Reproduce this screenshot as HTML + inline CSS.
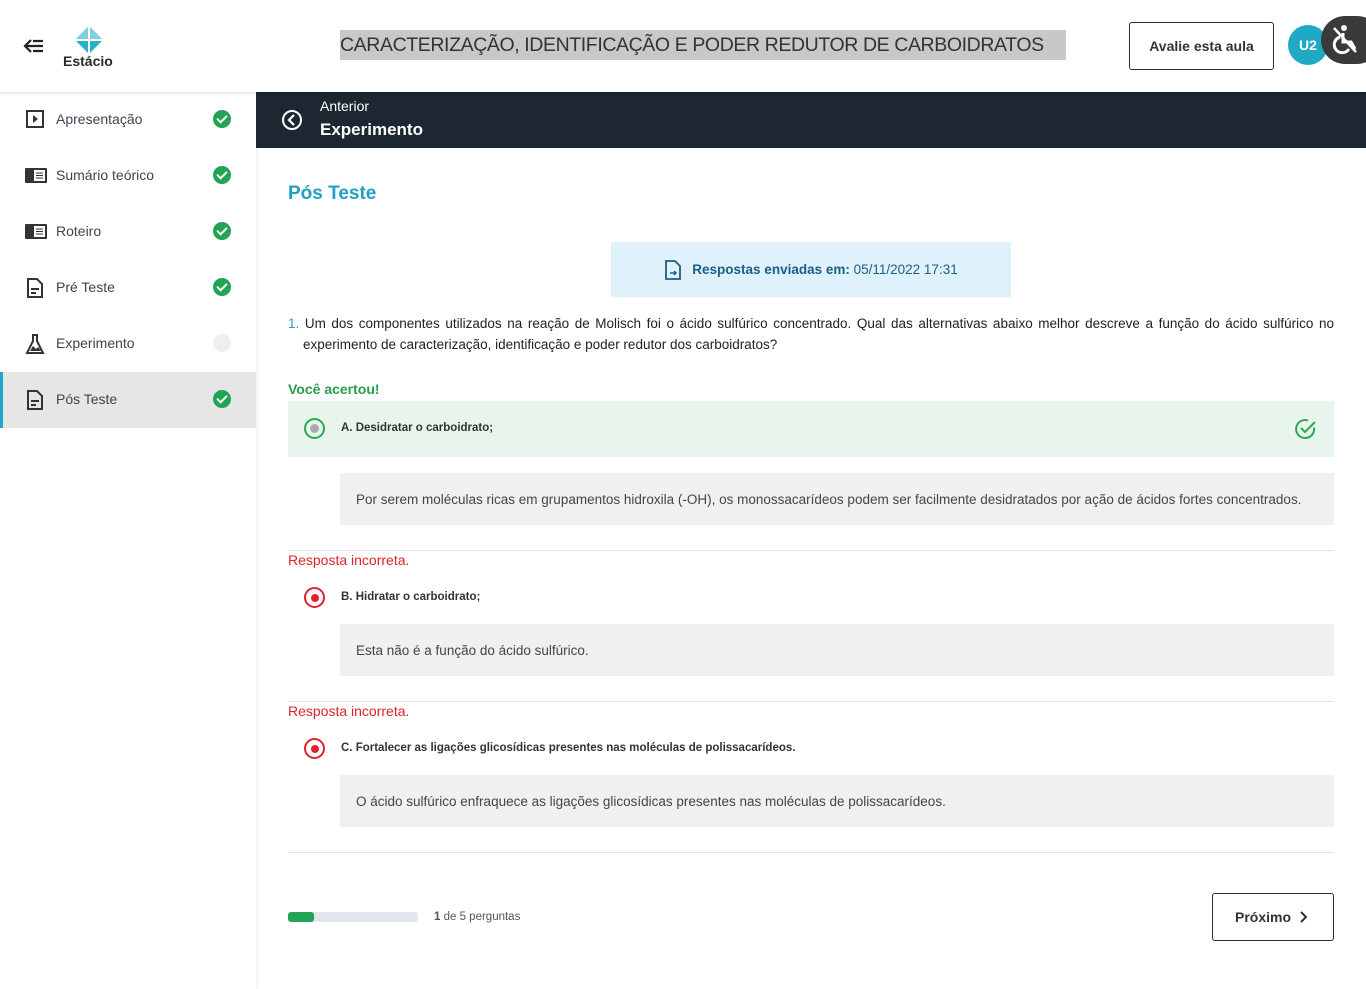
<!DOCTYPE html>
<html><head><meta charset="utf-8"><style>
*{box-sizing:border-box;margin:0;padding:0}
body{width:1366px;height:989px;overflow:hidden;background:#fff;font-family:"Liberation Sans",sans-serif;color:#333;position:relative}
.hdr{position:absolute;left:0;top:0;width:1366px;height:92px;background:#fff;box-shadow:0 1px 4px rgba(0,0,0,.15);z-index:2}
.side{position:absolute;left:0;top:92px;width:256px;height:897px;background:#fff;box-shadow:1px 0 3px rgba(0,0,0,.08)}
.it{position:relative;height:56px;display:flex;align-items:center;padding-left:56px;font-size:14px;color:#3d4450;padding-bottom:2px}
.it.act{background:#e6e6e6;border-left:3px solid #1fa9c4;padding-left:53px}
.it .ic{position:absolute;left:25px;top:18px}
.ok{position:absolute;left:213px;top:18px;width:18px;height:18px;border-radius:50%;background:#21a453}
.ok:after{content:"";position:absolute;left:6px;top:3px;width:4px;height:8px;border:solid #fff;border-width:0 2px 2px 0;transform:rotate(45deg)}
.ok.no{background:#eeeff1}.ok.no:after{display:none}
.it.act .ok{left:210px}
.bar{position:absolute;left:256px;top:92px;width:1110px;height:56px;background:#1d2731;color:#fff}
.abs{position:absolute}
.fb{position:absolute;left:340px;width:994px;height:52px;background:#f0f0f0;font-size:13.5px;color:#444;padding-left:16px;display:flex;align-items:center}
.red{color:#e0222a;font-size:14px}
.hr{position:absolute;left:288px;width:1046px;border-top:1px solid #e3e3e3}
.opt{position:absolute;font-size:11.5px;font-weight:bold;color:#333}
.rr{position:absolute;left:304px;width:21px;height:21px;border-radius:50%;border:2px solid #e0222a}
.rr:after{content:"";position:absolute;left:4.5px;top:4.5px;width:8px;height:8px;border-radius:50%;background:#e0222a}
</style></head><body>
<div class="hdr">
 <svg class="abs" style="left:23px;top:38px" width="22" height="16" viewBox="0 0 22 16"><path d="M8 2 2 8l6 6M2 8h18M10 3h10M10 13h10" stroke="#222" stroke-width="2.2" fill="none"/></svg>
 <svg class="abs" style="left:75px;top:26px" width="28" height="28" viewBox="0 0 28 28"><path d="M14 0 28 14 14 28 0 14z" fill="#2ab0c8"/><path d="M14 0 28 14H0z" fill="#7fd0d8"/><path d="M14 0v28M0 14h28" stroke="#fff" stroke-width="2"/></svg>
 <div class="abs" style="left:63px;top:53px;font-size:14px;font-weight:bold;color:#2a2a2a">Estácio</div>
 <div class="abs" style="left:340px;top:30px;height:30px;background:#c8c8c8;font-size:19.5px;line-height:30px;color:#333;width:726px;white-space:nowrap;overflow:hidden;letter-spacing:-0.4px">CARACTERIZAÇÃO, IDENTIFICAÇÃO E PODER REDUTOR DE CARBOIDRATOS</div>
 <div class="abs" style="left:1129px;top:22px;width:145px;height:48px;border:1px solid #2a2f36;border-radius:3px;font-size:14px;font-weight:bold;color:#333;display:flex;align-items:center;justify-content:center">Avalie esta aula</div>
 <div class="abs" style="left:1288px;top:25px;width:40px;height:40px;border-radius:50%;background:#1fa9c4;color:#fff;font-weight:bold;font-size:14px;display:flex;align-items:center;justify-content:center">U2</div>
 <div class="abs" style="left:1321px;top:16px;width:60px;height:48px;border-radius:24px;background:#3a3a3a"></div>
 <svg class="abs" style="left:1330px;top:24px" width="30" height="32" viewBox="0 0 30 32"><circle cx="14" cy="4" r="3" fill="#fff"/><path d="M13 9v9h8l4 7M10 13a8 8 0 1 0 9 12" stroke="#fff" stroke-width="3" fill="none"/><path d="M4 4l22 24" stroke="#fff" stroke-width="2.5"/></svg>
</div>
<div class="side">
 <div class="it"><svg class="ic" width="20" height="18"><rect x="2" y="1" width="16" height="16" fill="none" stroke="#333" stroke-width="2"/><path d="M8 5l5 4-5 4z" fill="#333"/></svg>Apresentação<span class="ok"></span></div>
 <div class="it"><svg class="ic" width="22" height="18"><rect x="0" y="2" width="22" height="15" rx="1" fill="#333"/><rect x="9" y="4" width="11" height="11" fill="#fff"/><path d="M11 7h7M11 9.5h7M11 12h7" stroke="#333"/></svg>Sumário teórico<span class="ok"></span></div>
 <div class="it"><svg class="ic" width="22" height="18"><rect x="0" y="2" width="22" height="15" rx="1" fill="#333"/><rect x="9" y="4" width="11" height="11" fill="#fff"/><path d="M11 7h7M11 9.5h7M11 12h7" stroke="#333"/></svg>Roteiro<span class="ok"></span></div>
 <div class="it"><svg class="ic" width="20" height="20"><path d="M3 1h9l5 5v13H3z" fill="none" stroke="#333" stroke-width="2"/><path d="M6 11h8M6 15h5" stroke="#333" stroke-width="2"/></svg>Pré Teste<span class="ok"></span></div>
 <div class="it"><svg class="ic" width="20" height="20"><path d="M7 1h6M8 1v6L2 19h16L12 7V1" fill="none" stroke="#333" stroke-width="2"/><path d="M5 17l3-5 3 3 2-2 3 4z" fill="#333"/></svg>Experimento<span class="ok no"></span></div>
 <div class="it act"><svg class="ic" width="20" height="20" style="left:22px"><path d="M3 1h9l5 5v13H3z" fill="none" stroke="#333" stroke-width="2"/><path d="M6 11h8M6 15h5" stroke="#333" stroke-width="2"/></svg>Pós Teste<span class="ok"></span></div>
</div>
<div class="bar">
 <svg class="abs" style="left:25px;top:17px" width="22" height="22"><circle cx="11" cy="11" r="9" fill="none" stroke="#fff" stroke-width="2"/><path d="M13 6l-5 5 5 5" fill="none" stroke="#fff" stroke-width="2.2"/></svg>
 <div class="abs" style="left:64px;top:6px;font-size:14px">Anterior</div>
 <div class="abs" style="left:64px;top:28px;font-size:17px;font-weight:bold">Experimento</div>
</div>
<div class="abs" style="left:288px;top:183px;font-size:19px;font-weight:bold;color:#22a0c2">Pós Teste</div>
<div class="abs" style="left:611px;top:242px;width:400px;height:55px;background:#dff2fb;display:flex;align-items:center;justify-content:center;font-size:13.5px;color:#1d5d86">
 <svg width="18" height="20" style="margin-right:10px"><path d="M2 1h9l5 5v13H2z" fill="none" stroke="#1d5d86" stroke-width="1.8"/><path d="M6 13h6M10 11l2 2-2 2" stroke="#1d5d86" stroke-width="1.5" fill="none"/></svg>
 <b style="font-weight:bold">Respostas enviadas em:</b>&nbsp;05/11/2022 17:31</div>
<div class="abs" style="left:288px;top:313px;width:1046px;font-size:13.5px;line-height:21px;color:#222;padding-left:15px;text-indent:-15px;text-align:justify"><span style="color:#22a0c2">1.</span> Um dos componentes utilizados na reação de Molisch foi o ácido sulfúrico concentrado. Qual das alternativas abaixo melhor descreve a função do ácido sulfúrico no experimento de caracterização, identificação e poder redutor dos carboidratos?</div>
<div class="abs" style="left:288px;top:381px;font-size:14px;font-weight:bold;color:#2a9d4f">Você acertou!</div>
<div class="abs" style="left:288px;top:401px;width:1046px;height:56px;background:#e8f5ec"></div>
<div class="abs" style="left:304px;top:418px;width:21px;height:21px;border-radius:50%;border:2px solid #2aa852"></div>
<div class="abs" style="left:310px;top:424px;width:9px;height:9px;border-radius:50%;background:#aaa"></div>
<div class="opt" style="left:341px;top:422px">A. Desidratar o carboidrato;</div>
<svg class="abs" style="left:1295px;top:418px" width="22" height="22"><path d="M19 9.5A9 9 0 1 1 13 2.5" fill="none" stroke="#2aa852" stroke-width="2"/><path d="M6 10l4 4 10-10" fill="none" stroke="#2aa852" stroke-width="2"/></svg>
<div class="fb" style="top:473px">Por serem moléculas ricas em grupamentos hidroxila (-OH), os monossacarídeos podem ser facilmente desidratados por ação de ácidos fortes concentrados.</div>
<div class="hr" style="top:550px"></div>
<div class="abs red" style="left:288px;top:552px">Resposta incorreta.</div>
<div class="rr" style="top:587px"></div>
<div class="opt" style="left:341px;top:591px">B. Hidratar o carboidrato;</div>
<div class="fb" style="top:624px">Esta não é a função do ácido sulfúrico.</div>
<div class="hr" style="top:701px"></div>
<div class="abs red" style="left:288px;top:703px">Resposta incorreta.</div>
<div class="rr" style="top:738px"></div>
<div class="opt" style="left:341px;top:742px">C. Fortalecer as ligações glicosídicas presentes nas moléculas de polissacarídeos.</div>
<div class="fb" style="top:775px">O ácido sulfúrico enfraquece as ligações glicosídicas presentes nas moléculas de polissacarídeos.</div>
<div class="hr" style="top:852px"></div>
<div class="abs" style="left:288px;top:912px;width:130px;height:10px;border-radius:3px;background:#e3e6ea"></div>
<div class="abs" style="left:288px;top:912px;width:26px;height:10px;border-radius:3px;background:#21a453"></div>
<div class="abs" style="left:434px;top:911px;font-size:11.5px;color:#555"><b>1</b> de 5 perguntas</div>
<div class="abs" style="left:1212px;top:893px;width:122px;height:48px;border:1px solid #2a2f36;border-radius:3px;font-size:14px;font-weight:bold;color:#333;display:flex;align-items:center;justify-content:center">Próximo <svg width="14" height="12" style="margin-left:6px"><path d="M4 1l5 5-5 5" fill="none" stroke="#333" stroke-width="2"/></svg></div>
</body></html>
